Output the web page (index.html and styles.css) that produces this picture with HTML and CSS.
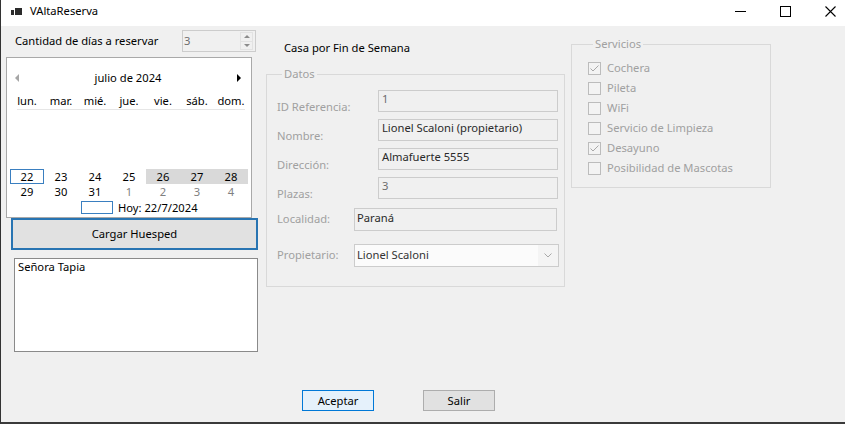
FILE: index.html
```html
<!DOCTYPE html>
<html lang="es">
<head>
<meta charset="utf-8">
<title>VAltaReserva</title>
<link rel="stylesheet" href="styles.css">
</head>
<body>
<div class="window">
  <header class="titlebar">
    <svg class="app-icon" width="11" height="7" viewBox="0 0 11 7"><rect x="4" y="0" width="7" height="7" fill="#2b2b2b"/><rect x="0" y="2" width="3" height="5" fill="#2b2b2b"/></svg>
    <span class="title">VAltaReserva</span>
    <div class="controls">
      <span class="ctl"><svg width="11" height="1" viewBox="0 0 11 1"><rect x="0" y="0" width="11" height="1" fill="#000"/></svg></span>
      <span class="ctl"><svg width="11" height="11" viewBox="0 0 11 11"><rect x="0.5" y="0.5" width="10" height="10" fill="none" stroke="#000" stroke-width="1"/></svg></span>
      <span class="ctl"><svg width="11" height="11" viewBox="0 0 11 11"><path d="M0.5 0.5 L10.5 10.5 M10.5 0.5 L0.5 10.5" stroke="#000" stroke-width="1.1" fill="none"/></svg></span>
    </div>
  </header>

  <div class="main">
    <div class="col-left">
      <div class="qty">
        <span class="qty-label">Cantidad de días a reservar</span>
        <div class="numeric">
          <span class="num-val">3</span>
          <div class="spin">
            <span class="spin-btn"><span class="tri-up"></span></span>
            <span class="spin-btn"><span class="tri-down"></span></span>
          </div>
        </div>
      </div>

      <div class="calendar">
        <div class="cal-head">
          <span class="arr-left"></span>
          <span class="month">julio de 2024</span>
          <span class="arr-right"></span>
        </div>
        <div class="cal-grid dow">
          <span>lun.</span><span>mar.</span><span>mié.</span><span>jue.</span><span>vie.</span><span>sáb.</span><span>dom.</span>
        </div>
        <div class="dow-rule"></div>
        <div class="cal-weeks">
          <div class="cal-grid week">
            <span class="today">22</span><span>23</span><span>24</span><span>25</span><span class="sel">26</span><span class="sel">27</span><span class="sel">28</span>
          </div>
          <div class="cal-grid week">
            <span>29</span><span>30</span><span>31</span><span class="trail">1</span><span class="trail">2</span><span class="trail">3</span><span class="trail">4</span>
          </div>
        </div>
        <div class="cal-today"><span class="today-box"></span><span>Hoy: 22/7/2024</span></div>
      </div>

      <button class="btn btn-wide">Cargar Huesped</button>

      <div class="listbox">
        <div class="list-item">Señora Tapia</div>
      </div>
    </div>

    <div class="col-mid">
      <div class="caption">Casa por Fin de Semana</div>
      <fieldset class="group datos">
        <legend>Datos</legend>
        <div class="frow">
          <span class="flabel lbl-wide">ID Referencia:</span>
          <span class="tb tb-std disabled">1</span>
        </div>
        <div class="frow">
          <span class="flabel lbl-wide">Nombre:</span>
          <span class="tb tb-std">Lionel Scaloni (propietario)</span>
        </div>
        <div class="frow">
          <span class="flabel lbl-wide">Dirección:</span>
          <span class="tb tb-std">Almafuerte 5555</span>
        </div>
        <div class="frow">
          <span class="flabel lbl-wide">Plazas:</span>
          <span class="tb tb-std disabled">3</span>
        </div>
        <div class="frow frow-tall frow-loc">
          <span class="flabel lbl-narrow">Localidad:</span>
          <span class="tb tb-loc">Paraná</span>
        </div>
        <div class="frow frow-tall frow-prop">
          <span class="flabel lbl-narrow">Propietario:</span>
          <div class="combo">
            <span class="combo-text">Lionel Scaloni</span>
            <span class="combo-arrow"><svg width="8" height="5" viewBox="0 0 8 5"><polyline points="0.5,0.5 4,4 7.5,0.5" fill="none" stroke="#a8a8a8" stroke-width="1"/></svg></span>
          </div>
        </div>
      </fieldset>
    </div>

    <div class="col-right">
      <fieldset class="group servicios">
        <legend>Servicios</legend>
        <div class="chk-row"><span class="chk"><svg width="11" height="11" viewBox="0 0 11 11"><polyline points="1.5,5.5 4,8 9.5,2.5" fill="none" stroke="#a8a8a8" stroke-width="1"/></svg></span><span class="chk-label">Cochera</span></div>
        <div class="chk-row"><span class="chk"></span><span class="chk-label">Pileta</span></div>
        <div class="chk-row"><span class="chk"></span><span class="chk-label">WiFi</span></div>
        <div class="chk-row"><span class="chk"></span><span class="chk-label">Servicio de Limpieza</span></div>
        <div class="chk-row"><span class="chk"><svg width="11" height="11" viewBox="0 0 11 11"><polyline points="1.5,5.5 4,8 9.5,2.5" fill="none" stroke="#a8a8a8" stroke-width="1"/></svg></span><span class="chk-label">Desayuno</span></div>
        <div class="chk-row"><span class="chk"></span><span class="chk-label">Posibilidad de Mascotas</span></div>
      </fieldset>
    </div>
  </div>

  <div class="footer">
    <button class="btn btn-small btn-default">Aceptar</button>
    <button class="btn btn-small">Salir</button>
  </div>
</div>
</body>
</html>
```

FILE: styles.css
```css
* { box-sizing: border-box; }

html, body {
  margin: 0;
  padding: 0;
}

body {
  width: 845px;
  height: 424px;
  overflow: hidden;
  font-family: "Noto Sans", "Open Sans", sans-serif;
  font-size: 11.2px;
  line-height: 16px;
  color: #000;
  background: #f0f0f0;
}

.window {
  width: 845px;
  height: 424px;
  display: flex;
  flex-direction: column;
  background: #f0f0f0;
  border-left: 1px solid #333;
  border-bottom: 2px solid #3a3a3a;
  overflow: hidden;
}

/* title bar */
.titlebar {
  flex: none;
  height: 26px;
  background: #fff;
  display: flex;
  align-items: center;
  padding: 0 0 4px 10px;
}
.app-icon { display: block; margin-right: 8px; }
.title { color: #000; }
.controls {
  margin-left: auto;
  margin-right: -8px;
  display: flex;
  align-items: center;
}
.ctl {
  width: 45px;
  height: 22px;
  display: flex;
  align-items: center;
  justify-content: center;
}
.ctl svg { display: block; }

/* main area */
.main {
  flex: 1;
  display: flex;
  align-items: flex-start;
}

.col-left {
  width: 252px;
  margin-left: 5px;
  display: flex;
  flex-direction: column;
  align-items: flex-start;
}

.qty {
  margin-top: 4px;
  width: 250px;
  height: 22px;
  display: flex;
  align-items: center;
}
.qty-label { margin-left: 9px; }
.numeric {
  margin-left: auto;
  width: 74px;
  height: 22px;
  border: 1px solid #cccccc;
  background: #f0f0f0;
  display: flex;
}
.num-val {
  flex: 1;
  color: #6d6d6d;
  padding-left: 1px;
  line-height: 19px;
}
.spin {
  width: 13px;
  margin: 1px 2px 1px 0;
  display: flex;
  flex-direction: column;
  border: 1px solid #e2e2e2;
}
.spin-btn {
  flex: 1;
  display: flex;
  align-items: center;
  justify-content: center;
}
.spin-btn + .spin-btn { border-top: 1px solid #e2e2e2; }
.tri-up, .tri-down {
  width: 0;
  height: 0;
  border-left: 3px solid transparent;
  border-right: 3px solid transparent;
}
.tri-up { border-bottom: 3px solid #8c8c8c; }
.tri-down { border-top: 3px solid #8c8c8c; }

/* calendar */
.calendar {
  margin-top: 5px;
  width: 246px;
  height: 161px;
  border: 1px solid #a9a9a9;
  background: #fff;
  padding: 0 3px;
  display: flex;
  flex-direction: column;
}
.cal-head {
  margin-top: 12px;
  height: 16px;
  display: flex;
  align-items: center;
  justify-content: space-between;
  padding: 0 7px 0 5px;
}
.arr-left, .arr-right {
  width: 0;
  height: 0;
  border-top: 4px solid transparent;
  border-bottom: 4px solid transparent;
}
.arr-left { border-right: 4px solid #a6a6a6; }
.arr-right { border-left: 4px solid #000; }

.cal-grid {
  display: grid;
  grid-template-columns: repeat(7, 34px);
  width: 238px;
}
.cal-grid span { text-align: center; }
.dow {
  margin-top: 7px;
  height: 16px;
}
.dow-rule {
  margin: 0 3px 0 7px;
  border-bottom: 1px solid #e6e6e6;
}
.cal-weeks { margin-top: 59px; }
.week { height: 15px; line-height: 15px; }
.week .sel { background: #d9d9d9; }
.week .today { border: 1px solid #3a7fc0; line-height: 13px; }
.week .trail { color: #808080; }
.cal-today {
  margin-top: 2px;
  margin-left: 71px;
  height: 13px;
  display: flex;
  align-items: center;
  line-height: 12px;
}
.today-box {
  width: 32px;
  height: 13px;
  border: 1px solid #3a7fc0;
  margin-right: 5px;
}

/* buttons */
.btn {
  font: inherit;
  color: #000;
  background: #e1e1e1;
  border: 1px solid #adadad;
  padding: 0;
  margin: 0;
  line-height: 16px;
}
.btn-wide {
  margin-left: 5px;
  width: 247px;
  height: 32px;
  border: 2px solid #2874b2;
}
.btn-small {
  width: 72px;
  height: 21px;
}
.btn-default {
  background: #e5f1fb;
  border-color: #0078d7;
}

/* list box */
.listbox {
  margin-top: 8px;
  margin-left: 8px;
  width: 244px;
  height: 94px;
  border: 1px solid #8a8a8a;
  background: #fff;
}
.list-item { padding-left: 3px; }

/* middle column */
.col-mid {
  width: 299px;
  margin-left: 8px;
}
.caption {
  margin: 14px 0 0 18px;
}

.group {
  margin: 0;
  min-width: 0;
  border: 1px solid #d9d9d9;
}
.group legend {
  padding: 0 2px;
  margin-left: 5px;
  color: #a0a0a0;
  line-height: 16px;
}

.datos {
  margin-top: 10px;
  height: 221px;
  padding: 8px 0 0 10px;
}
.frow {
  display: flex;
  align-items: flex-start;
  height: 22px;
}
.frow + .frow { margin-top: 7px; }
.frow.frow-tall { height: 23px; }
.frow.frow-loc { margin-top: 9px; }
.frow.frow-prop { margin-top: 13px; }
.flabel { color: #a0a0a0; white-space: nowrap; }
.lbl-wide { width: 101px; padding-top: 9px; }
.lbl-narrow { width: 77px; padding-top: 3px; }

.tb {
  display: block;
  border: 1px solid #cccccc;
  background: #f0f0f0;
  color: #2a2a2a;
  white-space: nowrap;
}
.tb.disabled { color: #6d6d6d; }
.tb-std {
  width: 180px;
  height: 22px;
  padding: 0 0 0 3px;
}
.tb-loc {
  width: 203px;
  height: 23px;
  padding: 1px 0 0 2px;
}

.combo {
  width: 205px;
  height: 23px;
  border: 1px solid #cccccc;
  background: #f4f4f4;
  display: flex;
}
.combo-text {
  flex: 1;
  background: #fbfbfb;
  color: #333;
  padding: 2px 0 0 2px;
}
.combo-arrow {
  width: 20px;
  display: flex;
  align-items: center;
  justify-content: center;
}
.combo-arrow svg { display: block; }

/* right column */
.col-right {
  width: 200px;
  margin-left: 6px;
}
.servicios {
  margin-top: 10px;
  height: 152px;
  padding: 6px 0 0 16px;
}
.chk-row {
  height: 20px;
  display: flex;
  align-items: center;
}
.chk {
  width: 13px;
  height: 13px;
  border: 1px solid #bcbcbc;
  background: #f3f3f3;
  margin-right: 6px;
}
.chk svg { display: block; }
.chk-label { color: #a0a0a0; }

/* footer */
.footer {
  flex: none;
  display: flex;
  gap: 49px;
  padding: 0 0 11px 301px;
}
```
